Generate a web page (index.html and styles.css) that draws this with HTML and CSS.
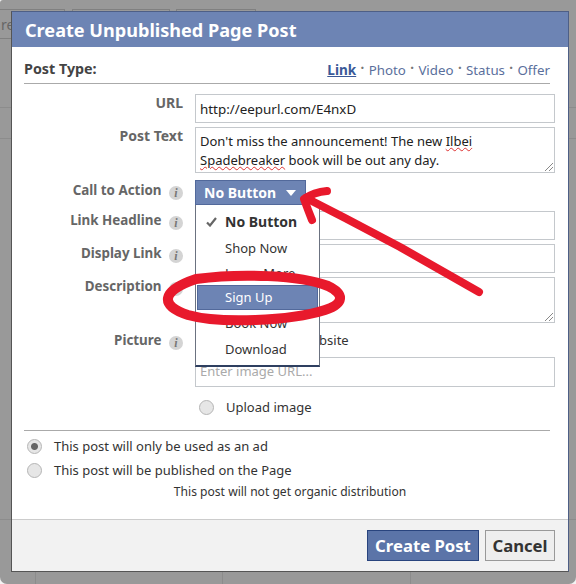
FILE: index.html
```html
<!DOCTYPE html>
<html lang="en">
<head>
    <meta charset="UTF-8">
    <meta name="viewport" content="width=device-width, initial-scale=1.0">
    <title>Create Unpublished Page Post</title>
    <link rel="stylesheet" href="styles.css">
</head>
<body>
    <div class="backdrop-tabs">
        <span class="backdrop-tab tab-one">re</span>
        <span class="backdrop-tab tab-two"></span>
        <span class="backdrop-tab tab-three"></span>
    </div>

    <div class="dialog">
        <h1 class="dialog-title">Create Unpublished Page Post</h1>

        <div class="dialog-body">
            <div class="post-type">
                <strong>Post Type:</strong>
                <div class="type-links">
                    <a class="active">Link</a><i>·</i><a>Photo</a><i>·</i><a>Video</a><i>·</i><a>Status</a><i>·</i><a>Offer</a>
                </div>
            </div>

            <div class="form-grid">
                <label class="field-label row-url">URL</label>
                <div class="input-box row-url">http://eepurl.com/E4nxD</div>

                <label class="field-label row-text">Post Text</label>
                <div class="input-box text-box row-text">
                    Don't miss the announcement! The new <u>Ilbei</u><br>
                    <u>Spadebreaker</u> book will be out any day.
                    <span class="grip"></span>
                </div>

                <label class="field-label with-info row-cta">Call to Action <span class="info">i</span></label>
                <div class="cta-wrap row-cta">
                    <button class="cta-button">No Button <span class="caret"></span></button>
                    <ul class="cta-menu">
                        <li class="selected">
                            <svg class="check" width="11" height="10" viewBox="0 0 11 10"><path d="M1 5.5 L4 8.5 L10 1" /></svg>
                            No Button
                        </li>
                        <li>Shop Now</li>
                        <li class="tight">Learn More</li>
                        <li class="hover">Sign Up</li>
                        <li>Book Now</li>
                        <li>Download</li>
                    </ul>
                </div>

                <label class="field-label with-info row-headline">Link Headline <span class="info">i</span></label>
                <div class="input-box row-headline"></div>

                <label class="field-label with-info row-display">Display Link <span class="info">i</span></label>
                <div class="input-box row-display"></div>

                <label class="field-label with-info row-desc">Description <span class="info">i</span></label>
                <div class="input-box text-box row-desc"><span class="grip"></span></div>

                <label class="field-label with-info row-picture">Picture <span class="info">i</span></label>
                <div class="picture-options row-picture">
                    <div class="radio-line website-line"><span class="radio"></span>Image from website</div>
                    <div class="input-box placeholder">Enter image URL...</div>
                    <div class="radio-line upload-line"><span class="radio"></span>Upload image</div>
                </div>
            </div>

            <div class="publish-options">
                <div class="radio-line"><span class="radio checked"></span>This post will only be used as an ad</div>
                <div class="radio-line"><span class="radio"></span>This post will be published on the Page</div>
                <p class="publish-note">This post will not get organic distribution</p>
            </div>
        </div>

        <div class="dialog-footer">
            <button class="btn btn-primary">Create Post</button>
            <button class="btn btn-cancel">Cancel</button>
        </div>
    </div>

    <!-- red marker drawn over the screenshot -->
    <svg class="markup" width="576" height="584" viewBox="0 0 576 584">
        <path d="M479 292 L400 247 L345 218 L306 198" />
        <path d="M327 191 Q314 192 304 199 Q308 210 312 220" />
        <path class="ring" d="M196 279 C240 273 300 275 328 286 C345 294 344 304 325 310 C290 321 220 324 188 315 C160 306 160 291 196 279 Z" />
    </svg>
</body>
</html>
```

FILE: styles.css
```css
* {
    box-sizing: border-box;
}
html {
    background: #f4f4f4;
}
html, body {
    height: 584px;
}
body {
    margin: 0;
    position: relative;
    overflow: hidden;
    border-radius: 3px 0 7px 7px;
    background-color: #999;
    background-image:
        linear-gradient(#8c8c8c, #8c8c8c),
        linear-gradient(#8c8c8c, #8c8c8c),
        linear-gradient(#8c8c8c, #8c8c8c),
        linear-gradient(#8c8c8c, #8c8c8c),
        linear-gradient(#8c8c8c, #8c8c8c),
        linear-gradient(#8c8c8c, #8c8c8c);
    background-repeat: no-repeat;
    background-size: 100% 1px, 100% 1px, 100% 1px, 1px 12px, 1px 12px, 1px 12px;
    background-position: 0 107px, 0 138px, 0 519px, 35px 572px, 222px 572px, 410px 572px;
    font-family: "Noto Sans", sans-serif;
    font-size: 13px;
    color: #333;
}
.backdrop-tabs {
    position: absolute;
    top: 9px;
    left: 0;
}
.backdrop-tab {
    position: absolute;
    top: 0;
    height: 30px;
    border: 1px solid #808080;
    color: #666;
    font-size: 14px;
}
.tab-one { left: -20px; width: 85px; padding: 5px 0 0 20px; }
.tab-two { left: 72px; width: 98px; }
.tab-three { left: 176px; width: 80px; }

.dialog {
    position: relative;
    width: 558px;
    height: 561px;
    margin: 11px 0 0 11px;
    display: flex;
    flex-direction: column;
    border: 1px solid #4e5f86;
    border-bottom-color: #555;
    border-left-color: #555;
    background: #fff;
}
.dialog-title {
    margin: 0;
    height: 35px;
    padding: 0 13px;
    background: #6d84b4;
    color: #fff;
    font-size: 18.1px;
    font-weight: bold;
    line-height: 36px;
}
.dialog-body {
    flex: 1;
    padding: 0 18px 0 12px;
}
.post-type {
    display: flex;
    justify-content: space-between;
    align-items: center;
    height: 37px;
    padding-top: 7px;
    border-bottom: 1px solid #aaa;
}
.post-type strong {
    color: #444;
    font-size: 14.3px;
}
.type-links {
    font-size: 13.3px;
}
.type-links a {
    color: #5a6f9c;
}
.type-links a.active {
    color: #3b5998;
    font-size: 13.6px;
    font-weight: bold;
    text-decoration: underline;
}
.type-links i {
    display: inline-block;
    width: 12.5px;
    color: #777;
    font-style: normal;
    font-weight: bold;
    text-align: center;
    vertical-align: 2px;
}

.form-grid {
    display: grid;
    grid-template-columns: 171px 360px;
    grid-template-rows: 29px 46px 28px 31px 29px 46px auto;
    row-gap: 4px;
    margin-top: 10px;
}
.row-url { grid-row: 1; }
.row-text { grid-row: 2; }
.row-cta { grid-row: 3; margin-top: 3px; }
.row-headline { grid-row: 4; margin-top: 2px; }
.row-display { grid-row: 5; }
.row-desc { grid-row: 6; }
.row-picture { grid-row: 7; }

.field-label {
    grid-column: 1;
    justify-self: end;
    padding-right: 12px;
    color: #666;
    font-size: 14px;
    font-weight: bold;
    line-height: 18px;
    white-space: nowrap;
}
.with-info {
    padding-right: 12px;
    font-size: 13.4px;
}
.field-label.row-cta {
    padding-top: 1px;
}
.field-label.row-picture {
    padding-top: 4px;
}
.info {
    display: inline-block;
    width: 14px;
    height: 14px;
    margin-left: 4px;
    border-radius: 50%;
    background: #d4d4d4;
    color: #777;
    font-family: "Liberation Serif", serif;
    font-size: 12px;
    font-style: italic;
    line-height: 14px;
    text-align: center;
    vertical-align: -2px;
}
.input-box {
    grid-column: 2;
    position: relative;
    border: 1px solid #c4c8cc;
    background: #fff;
    padding: 5px 4px;
    color: #222;
    font-size: 13.4px;
    line-height: 19px;
}
.text-box {
    padding-top: 4px;
    font-size: 13px;
}
.text-box u {
    text-decoration: underline wavy #d33 1px;
}
.grip {
    position: absolute;
    right: 1px;
    bottom: 1px;
    width: 9px;
    height: 9px;
    background: linear-gradient(135deg, transparent 50%, #888 50%, #888 58%, transparent 58%, transparent 75%, #888 75%, #888 83%, transparent 83%);
}
.cta-wrap {
    grid-column: 2;
    position: relative;
}
.cta-button {
    display: block;
    width: 111px;
    height: 25px;
    padding: 0 0 0 8px;
    border: 1px solid #52699b;
    background: #6d84b4;
    color: #fff;
    font: bold 14px "Noto Sans", sans-serif;
    text-align: left;
}
.caret {
    display: inline-block;
    margin-left: 6px;
    border: 5.5px solid transparent;
    border-top: 6px solid #fff;
    border-bottom: 0;
    vertical-align: 2px;
}
.cta-menu {
    position: absolute;
    z-index: 2;
    top: 25px;
    left: 0;
    width: 125px;
    height: 162px;
    margin: 0;
    padding: 4px 1px 0;
    list-style: none;
    background: #fff;
    border: 1px solid #6b7280;
    border-top: 0;
    border-bottom: 2px solid #2e3f60;
}
.cta-menu li {
    height: 26px;
    padding-left: 28px;
    line-height: 26px;
    color: #333;
}
.cta-menu .tight {
    height: 24px;
    line-height: 24px;
}
.cta-menu .selected {
    position: relative;
    font-size: 14px;
    font-weight: bold;
}
.check {
    position: absolute;
    left: 9px;
    top: 8px;
}
.check path {
    fill: none;
    stroke: #666;
    stroke-width: 2.2;
}
.cta-menu .hover {
    height: 25px;
    background: #6d84b4;
    border: 1px solid #52699b;
    color: #fff;
    padding-left: 27px;
    line-height: 23px;
}
.picture-options {
    grid-column: 2;
}
.radio-line {
    display: flex;
    align-items: center;
    color: #333;
    line-height: 24px;
}
.radio {
    flex: none;
    width: 15px;
    height: 15px;
    margin-right: 12px;
    border: 1px solid #b5b5b5;
    border-radius: 50%;
    background: #e6e6e6;
}
.radio.checked {
    background: radial-gradient(circle, #666 0 3px, #e6e6e6 4px);
}
.website-line {
    height: 26px;
    margin-bottom: 4px;
    padding-left: 4px;
}
.picture-options .placeholder {
    height: 30px;
    color: #aaa;
    font-size: 13px;
    line-height: 17px;
}
.upload-line {
    height: 40px;
    padding-left: 4px;
}
.publish-options {
    margin-top: 3px;
    padding-top: 3px;
    border-top: 1px solid #aaa;
}
.publish-options .radio-line {
    padding-left: 3px;
}
.publish-note {
    margin: 0;
    padding-left: 6px;
    text-align: center;
    font-size: 12.1px;
    line-height: 20px;
}
.dialog-footer {
    display: flex;
    justify-content: flex-end;
    gap: 6px;
    height: 52px;
    padding: 10px 13px 0 0;
    background: #f2f2f2;
    border-top: 1px solid #ccc;
}
.btn {
    height: 31px;
    padding: 0;
    border: 1px solid #999;
    background: #eee;
    color: #333;
    font: bold 16.7px "Noto Sans", sans-serif;
}
.btn-primary {
    width: 112px;
    border-color: #29447e;
    background: #5b74a8;
    color: #fff;
}
.btn-cancel {
    width: 70px;
}
.markup {
    position: absolute;
    z-index: 5;
    top: 0;
    left: 0;
    pointer-events: none;
}
.markup path {
    fill: none;
    stroke: #e8192c;
    stroke-width: 8;
    stroke-linecap: round;
    stroke-linejoin: round;
}
.markup .ring {
    stroke-width: 10;
}
```
